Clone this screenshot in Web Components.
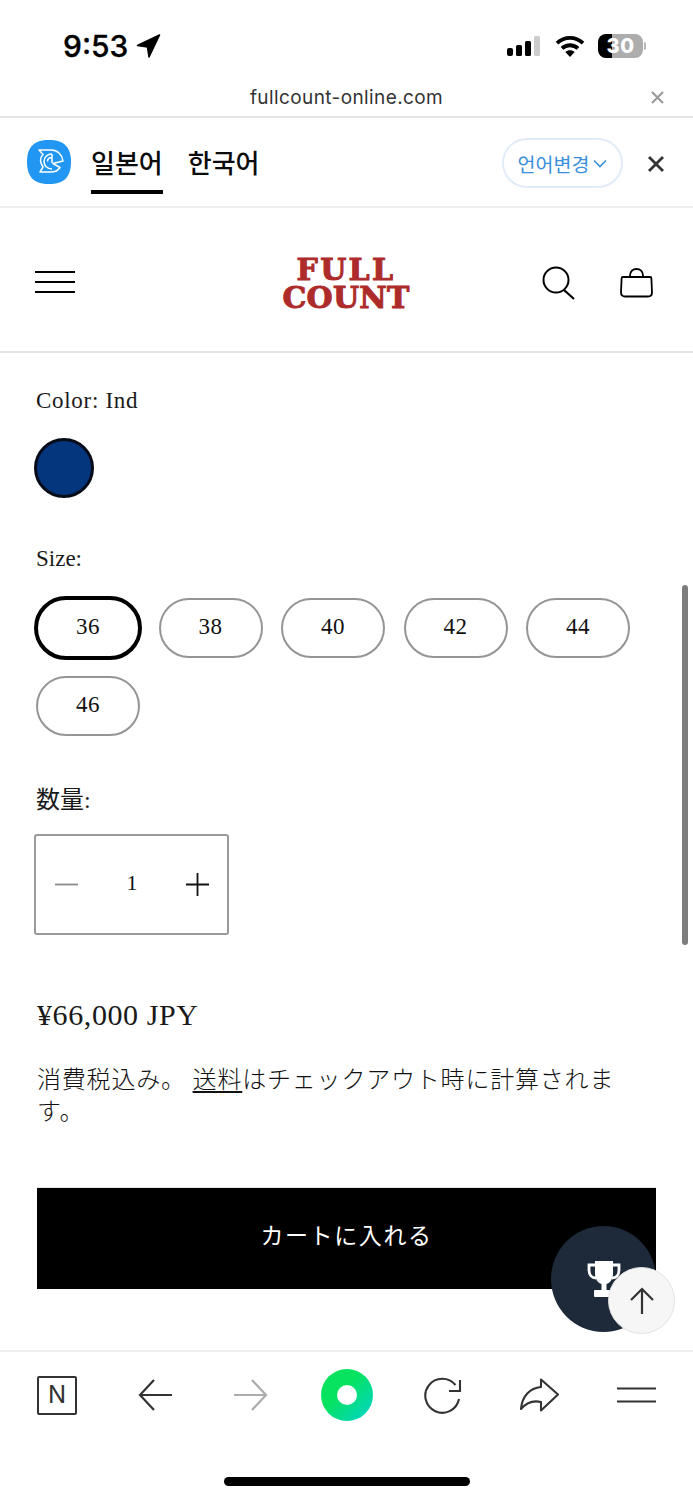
<!DOCTYPE html>
<html lang="ja">
<head>
<meta charset="utf-8">
<title>Full Count</title>
<style>
  html, body { margin: 0; background: #fff; }
  body { font-family: "Liberation Serif", "Noto Sans CJK JP", serif; color: #111; }
</style>
</head>
<body>
<page-shell>
  <status-bar></status-bar>
  <url-bar>fullcount-online.com</url-bar>
  <lang-bar></lang-bar>
  <shop-header></shop-header>
  <product-form>
    <option-label>Color: Ind</option-label>
    <color-swatch></color-swatch>
    <option-label class="size-label">Size:</option-label>
    <size-list>
      <size-pill selected>36</size-pill>
      <size-pill>38</size-pill>
      <size-pill>40</size-pill>
      <size-pill>42</size-pill>
      <size-pill>44</size-pill>
      <size-pill>46</size-pill>
    </size-list>
    <option-label class="qty-label">数量:</option-label>
    <qty-box></qty-box>
    <price-info></price-info>
    <buy-button>カートに入れる</buy-button>
  </product-form>
  <browser-nav></browser-nav>
  <float-actions></float-actions>
</page-shell>

<script>
// small helper: every element gets its own open shadow root from a html string
function define(name, html) {
  const template = document.createElement('template')
  template.innerHTML = html
  customElements.define(name, class extends HTMLElement {
    constructor() {
      super()
      this.attachShadow({mode: 'open'})
      this.shadowRoot.appendChild(template.content.cloneNode(true))
    }
  })
}

const SERIF = `"Liberation Serif", "Noto Sans CJK JP", serif`
const SANS = `Inter, "Noto Sans CJK KR", sans-serif`

define('page-shell', `
  <style>
    :host { display: flex; flex-direction: column; position: relative; width: 693px; height: 1500px; overflow: hidden; background: #fff; }
    .scroll { position: absolute; left: 682px; top: 585px; width: 6px; height: 360px; border-radius: 3px; background: #7d7d7d; }
  </style>
  <slot></slot>
  <div class="scroll"></div>
`)

define('status-bar', `
  <style>
    :host { display: flex; align-items: center; box-sizing: border-box; height: 78px; padding: 14px 47px 0 63px; font-family: ${SANS}; color: #000; }
    .time { font-size: 30px; font-weight: 500; line-height: 36px; -webkit-text-stroke: .3px #000; }
    .loc { margin-left: 8px; }
    .right { margin-left: auto; display: flex; align-items: center; }
    .battery { display: flex; align-items: center; justify-content: center; box-sizing: border-box; width: 45px; height: 24px; margin-left: 13px; border-radius: 8px;
      background: linear-gradient(90deg, #000 31%, #adadad 31%); color: #fff; font-size: 20px; font-weight: 800; letter-spacing: .5px; }
    .nub { width: 2px; height: 8px; margin-left: 1px; border-radius: 0 2px 2px 0; background: #b5b5b5; }
  </style>
  <span class="time">9:53</span>
  <svg class="loc" width="25" height="24" viewBox="0 0 25 24"><path d="M23.500 1 1.500 11.500 11.500 13 13 23Z" fill="#000" stroke="#000" stroke-width="1.600" stroke-linejoin="round"/></svg>
  <div class="right">
    <svg width="35" height="20" viewBox="0 0 35 20">
      <rect x="1" y="12" width="6" height="8" rx="2" fill="#000"/>
      <rect x="10" y="9" width="6" height="11" rx="1.500" fill="#000"/>
      <rect x="19" y="5" width="6" height="15" rx="1.500" fill="#000"/>
      <rect x="28" y="0" width="6" height="20" rx="1.500" fill="#ccc"/>
    </svg>
    <svg style="margin-left:14px" width="30" height="22" viewBox="0 0 30 22" fill="none" stroke="#000" stroke-width="3.800">
      <path d="M2 8.200C9.500 1 20.500 1 28 8.200"/>
      <path d="M7 13.400c4.600-4.200 11.400-4.200 16 0"/>
      <path d="M15 22 10.300 17c2.700-2.200 6.700-2.200 9.400 0Z" fill="#000" stroke="none"/>
    </svg>
    <span class="battery">30</span><span class="nub"></span>
  </div>
`)

define('url-bar', `
  <style>
    :host { display: flex; align-items: center; justify-content: center; position: relative; box-sizing: border-box; height: 40px; padding-top: 2px; border-bottom: 2px solid #e4e4e4; font: 19px/24px ${SANS}; letter-spacing: .4px; color: #333; }
    svg { position: absolute; right: 28px; top: 12px; }
  </style>
  <slot></slot>
  <svg width="15" height="15" viewBox="0 0 15 15" stroke="#9a9a9a" stroke-width="2.200"><path d="M2 2l11 11M13 2 2 13"/></svg>
`)

define('lang-bar', `
  <style>
    :host { display: flex; align-items: center; box-sizing: border-box; height: 90px; padding: 0 28px 0 27px; border-bottom: 2px solid #eee; font-family: "Noto Sans CJK KR", sans-serif; }
    .logo { width: 44px; height: 44px; flex: none; }
    .tabs { display: flex; gap: 25px; margin-left: 20px; align-self: flex-end; }
    .tab { padding-bottom: 8px; border-bottom: 4px solid transparent; margin-bottom: 12px; font-size: 26px; line-height: 40px; font-weight: 500; color: #0c0c0c; }
    .tab.on { border-bottom-color: #000; }
    .pick { display: flex; align-items: center; justify-content: center; gap: 4px; box-sizing: border-box; width: 121px; height: 50px; margin-left: auto; margin-top: 2px; border: 2px solid #e2ecf8; border-radius: 25px; color: #3a8fdb; font-size: 19.500px; }
    .x { margin-left: 24px; margin-top: 3px; }
  </style>
  <svg class="logo" viewBox="0 0 44 44">
    <path d="M22 0C37 0 44 7 44 22S37 44 22 44 0 37 0 22 7 0 22 0Z" fill="#2196f3"/>
    <path d="M12 10h12c6.500 0 11 4.500 12 11l-10 2.500 7 4c-2 3-5 4.500-9 4.500H13l3-5c-2-3-2.500-4.500-2.500-6.500s.5-4 2.500-6Z" fill="none" stroke="#fff" stroke-width="1.500" stroke-linejoin="round"/>
    <path d="M25 14c-5 0-8 3.500-8 7.500S20 29 25 29M25 14v9M20.500 21.500c0-2.500 2-4 4.500-4" fill="none" stroke="#fff" stroke-width="1.500"/>
  </svg>
  <div class="tabs"><span class="tab on">일본어</span><span class="tab">한국어</span></div>
  <div class="pick">언어변경<svg width="14" height="9" viewBox="0 0 14 9" fill="none" stroke="#3a8fdb" stroke-width="1.600"><path d="M1 1.500 7 7.500l6-6"/></svg></div>
  <svg class="x" width="18" height="18" viewBox="0 0 18 18" stroke="#333" stroke-width="2.800"><path d="M2 2l14 14M16 2 2 16"/></svg>
`)

define('shop-header', `
  <style>
    :host { display: grid; grid-template-columns: 1fr auto 1fr; align-items: center; box-sizing: border-box; height: 145px; padding: 8px 40px 0 35px; border-bottom: 2px solid #e3e3e3; }
    .logo { width: min-content; margin-left: 4px; text-align: center; font: bold 30px/28px "DejaVu Serif", serif; letter-spacing: .2px; color: #ad2b2a; -webkit-text-stroke: 1px #ad2b2a; }
    .logo::first-line { letter-spacing: 2.300px; }
    .icons { display: flex; justify-content: flex-end; align-items: center; gap: 44px; margin-top: -2px; }
    .burger { margin-top: -3px; }
  </style>
  <svg class="burger" width="40" height="22" viewBox="0 0 40 22" stroke="#000" stroke-width="2"><path d="M0 1h40M0 11h40M0 21h40"/></svg>
  <div class="logo">FULL COUNT</div>
  <div class="icons">
    <svg width="34" height="34" viewBox="0 0 34 34" fill="none" stroke="#000" stroke-width="2"><circle cx="14" cy="14" r="12.500"/><path d="M22 24l10 9" stroke-width="2.200"/></svg>
    <svg width="33" height="30" viewBox="0 0 33 30" fill="none" stroke="#000" stroke-width="1.800"><path d="M3 9h27c.8 0 1.400.6 1.400 1.500l.6 14c0 2.500-1.500 4-4 4H5c-2.500 0-4-1.500-4-4l.6-14C1.600 9.600 2.200 9 3 9Z"/><path d="M10 9V7.500C10 3.500 12.800 1 16.500 1S23 3.500 23 7.500V9"/></svg>
  </div>
`)

define('product-form', `
  <style>
    :host { display: block; padding: 33px 37px 0 36px; font-family: ${SERIF}; color: #111; }
  </style>
  <slot></slot>
`)

define('option-label', `
  <style>
    :host { display: block; font-size: 23px; line-height: 30px; letter-spacing: .7px; color: #1a1a1a; }
    :host(.size-label) { margin-top: 46px; letter-spacing: 0; }
    :host(.qty-label) { margin-top: 49px; font-size: 24px; letter-spacing: 0; }
  </style>
  <slot></slot>
`)

define('color-swatch', `
  <style>
    :host { display: block; box-sizing: border-box; width: 60px; height: 60px; margin: 22px 0 0 -2px; border: 3px solid #050b18; border-radius: 50%; background: #04367e; }
  </style>
`)

define('size-list', `
  <style>
    :host { display: flex; flex-wrap: wrap; gap: 18px 18.500px; margin-top: 24px; width: 620px; }
  </style>
  <slot></slot>
`)

define('size-pill', `
  <style>
    :host { display: flex; align-items: center; justify-content: center; box-sizing: border-box; width: 104px; height: 60px; padding-bottom: 3px; border: 2px solid #959595; border-radius: 30px; font-size: 23px; letter-spacing: .6px; color: #111; }
    :host([selected]) { width: 108px; height: 64px; margin: -2px; border: 4px solid #000; border-radius: 32px; }
  </style>
  <slot></slot>
`)

define('qty-box', `
  <style>
    :host { display: flex; align-items: center; justify-content: space-between; box-sizing: border-box; width: 195px; height: 101px; margin: 19px 0 0 -2px; padding: 0 18px 0 19px; border: 2px solid #999; border-radius: 3px; }
    span { font-size: 22px; line-height: 30px; margin-top: -4px; }
    svg { flex: none; }
  </style>
  <svg width="23" height="23" viewBox="0 0 23 23" stroke="#8c8c8c" stroke-width="1.800"><path d="M0 11.500h23"/></svg>
  <span>1</span>
  <svg width="23" height="23" viewBox="0 0 23 23" stroke="#111" stroke-width="1.800"><path d="M0 11.500h23M11.500 0v23"/></svg>
`)

define('price-info', `
  <style>
    :host { display: block; margin: 60px 0 0 1px; }
    .price { font-size: 30px; line-height: 40px; letter-spacing: .6px; color: #1a1a1a; }
    p { margin: 29px 0 0; font-size: 24px; line-height: 32px; letter-spacing: .8px; color: #111; font-weight: 300; }
    a { color: inherit; text-decoration: underline; text-underline-offset: 3px; }
  </style>
  <div class="price">¥66,000 JPY</div>
  <p><span>消費税込み。 </span><a>送料</a><span>はチェックアウト時に計算されま</span><br><span>す。</span></p>
`)

define('buy-button', `
  <style>
    :host { display: flex; align-items: center; justify-content: center; box-sizing: border-box; width: 619px; height: 101px; margin: 60px 0 0 1px; padding-bottom: 9px; background: #000; color: #fff; font-size: 23px; letter-spacing: 1.600px; box-shadow: 0 -1px 0 #e6e6e6; }
  </style>
  <slot></slot>
`)

define('browser-nav', `
  <style>
    :host { display: block; margin-top: auto; box-sizing: border-box; height: 150px; border-top: 2px solid #eee; }
    .row { display: flex; align-items: center; height: 86px; padding-left: 37px; }
    .n { display: flex; align-items: center; justify-content: center; box-sizing: border-box; width: 40px; height: 39px; border: 2.400px solid #333; border-radius: 2px; font: 400 24px/1 Inter, sans-serif; color: #333; }
    .rec { width: 52px; height: 52px; border-radius: 50%; background: linear-gradient(135deg, #07e35f 40%, #00d5c0 92%); display: flex; align-items: center; justify-content: center; }
    .rec i { display: block; width: 20px; height: 20px; border-radius: 50%; background: #fff; }
    svg { flex: none; }
    .home { width: 246px; height: 9px; margin: 39px auto 0; border-radius: 5px; background: #000; }
  </style>
  <div class="row">
    <span class="n">N</span>
    <svg style="margin-left:61px" width="34" height="32" viewBox="0 0 34 32" fill="none" stroke="#333" stroke-width="2.200"><path d="M34 16H2M16 1 2 16l14 15"/></svg>
    <svg style="margin-left:62px" width="34" height="32" viewBox="0 0 34 32" fill="none" stroke="#acacac" stroke-width="2.200"><path d="M0 16h32M18 1l14 15-14 15"/></svg>
    <div class="rec" style="margin-left:53px"><i></i></div>
    <svg style="margin-left:49px" width="40" height="40" viewBox="0 0 40 40" fill="none" stroke="#333" stroke-width="2.100"><path d="M37 24A17 17 0 1 1 33.500 10"/><path d="M38 5v11H27"/></svg>
    <svg style="margin-left:57px" width="40" height="34" viewBox="0 0 40 34" fill="none" stroke="#333" stroke-width="2.100" stroke-linejoin="round"><path d="M22 1.500 39 16.500 22 32.500V24C14 22 8 24 2 31 3 18 11 10 22 9Z"/></svg>
    <svg style="margin-left:58px" width="39" height="16" viewBox="0 0 39 16" stroke="#333" stroke-width="2.200"><path d="M0 1.500h39M0 14.500h39"/></svg>
  </div>
  <div class="home"></div>
`)

define('float-actions', `
  <style>
    :host { display: block; position: absolute; left: 551px; top: 1226px; width: 125px; height: 109px; }
    .dark { position: absolute; left: 0; top: 0; width: 105px; height: 106px; border-radius: 50%; background: #1e2a3a; display: flex; align-items: center; justify-content: center; }
    .up { position: absolute; left: 57px; top: 41px; width: 67px; height: 67px; box-sizing: border-box; border: 1.500px solid #e2e2e2; border-radius: 50%; background: #f6f6f7; display: flex; align-items: center; justify-content: center; }
  </style>
  <div class="dark">
    <svg width="34" height="36" viewBox="0 0 34 36" fill="#fff">
      <path d="M8 0h18v12c0 6-3 10-6.500 11v6h5v3H9.500v-3h5v-6C11 22 8 18 8 12Z"/>
      <path d="M8 4H2v5c0 5 3 8 7 8M26 4h6v5c0 5-3 8-7 8" fill="none" stroke="#fff" stroke-width="2.800"/>
      <rect x="7" y="29" width="20" height="7" rx="1"/>
    </svg>
  </div>
  <div class="up">
    <svg width="24" height="28" viewBox="0 0 24 28" fill="none" stroke="#333" stroke-width="2.200"><path d="M12 27V2M1 13 12 2l11 11"/></svg>
  </div>
`)
</script>
</body>
</html>
